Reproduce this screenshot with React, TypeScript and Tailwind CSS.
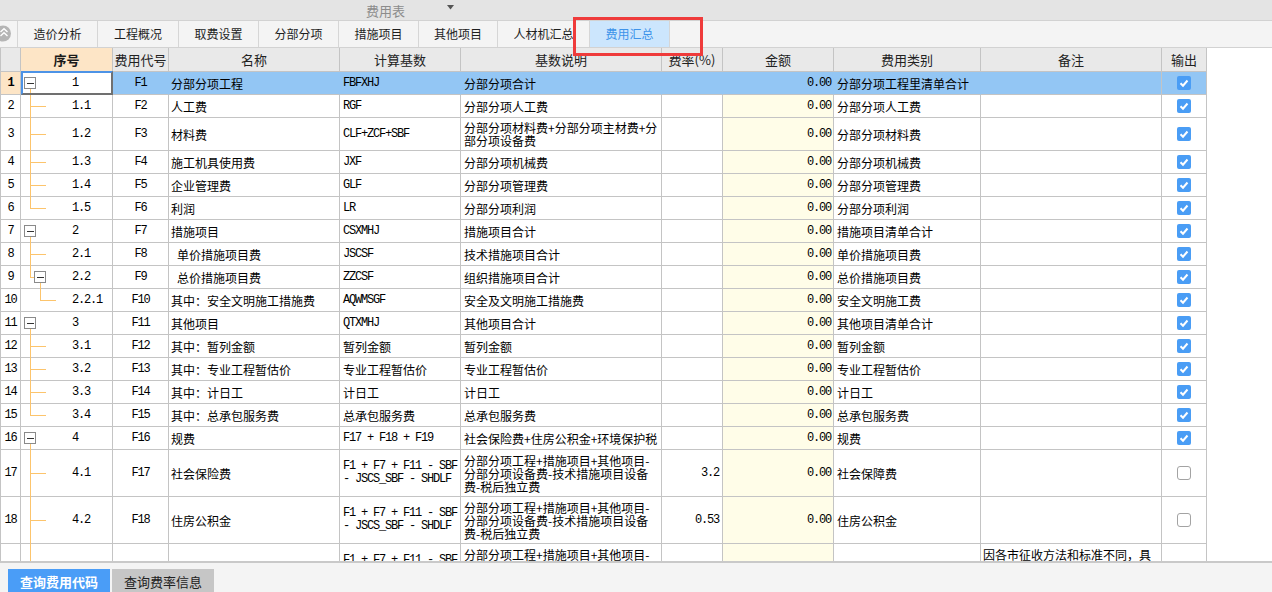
import React from 'react';

const CJK = "font-['Noto_Sans_CJK_SC',sans-serif] text-[12px]";
const MONO = "font-['Liberation_Mono','Noto_Sans_CJK_SC',monospace] text-[12px] tracking-[-1.2px]";
const isAscii = (s: string) => /^[\x00-\x7f]*$/.test(s);
const fontFor = (s: string) => (isAscii(s) ? MONO : CJK);

type VLine = { x: number; from: 'top' | 'box'; to: 'bottom' | 'center' };
type Tree = { box?: number; v: VLine[]; h?: [number, number] };

type RowData = {
  n: string;
  seq: string;
  code: string;
  name: string;
  indent?: boolean;
  base: string[];
  desc: string[];
  rate: string;
  amt: string;
  cat: string;
  note: string[];
  out: boolean | null;
  h: 23 | 33 | 47;
  tree: Tree;
  sel?: boolean;
};

const mid: Tree = { v: [{ x: 9, from: 'top', to: 'bottom' }], h: [9, 25] };
const last: Tree = { v: [{ x: 9, from: 'top', to: 'center' }], h: [9, 25] };
const root: Tree = { box: 3, v: [{ x: 9, from: 'box', to: 'bottom' }] };
const row9: Tree = {
  box: 13,
  v: [
    { x: 9, from: 'top', to: 'center' },
    { x: 19, from: 'box', to: 'bottom' },
  ],
  h: [9, 13],
};
const row10: Tree = { v: [{ x: 19, from: 'top', to: 'center' }], h: [19, 35] };
const trunk: Tree = { v: [{ x: 9, from: 'top', to: 'bottom' }] };

const longBase = ['F1 + F7 + F11 - SBF', '- JSCS_SBF - SHDLF'];
const longDesc = ['分部分项工程+措施项目+其他项目-', '分部分项设备费-技术措施项目设备', '费-税后独立费'];

const rows: RowData[] = [
  { n: '1', seq: '1', code: 'F1', name: '分部分项工程', base: ['FBFXHJ'], desc: ['分部分项合计'], rate: '', amt: '0.00', cat: '分部分项工程里清单合计', note: [], out: true, h: 23, tree: root, sel: true },
  { n: '2', seq: '1.1', code: 'F2', name: '人工费', base: ['RGF'], desc: ['分部分项人工费'], rate: '', amt: '0.00', cat: '分部分项人工费', note: [], out: true, h: 23, tree: mid },
  { n: '3', seq: '1.2', code: 'F3', name: '材料费', base: ['CLF+ZCF+SBF'], desc: ['分部分项材料费+分部分项主材费+分', '部分项设备费'], rate: '', amt: '0.00', cat: '分部分项材料费', note: [], out: true, h: 33, tree: mid },
  { n: '4', seq: '1.3', code: 'F4', name: '施工机具使用费', base: ['JXF'], desc: ['分部分项机械费'], rate: '', amt: '0.00', cat: '分部分项机械费', note: [], out: true, h: 23, tree: mid },
  { n: '5', seq: '1.4', code: 'F5', name: '企业管理费', base: ['GLF'], desc: ['分部分项管理费'], rate: '', amt: '0.00', cat: '分部分项管理费', note: [], out: true, h: 23, tree: mid },
  { n: '6', seq: '1.5', code: 'F6', name: '利润', base: ['LR'], desc: ['分部分项利润'], rate: '', amt: '0.00', cat: '分部分项利润', note: [], out: true, h: 23, tree: last },
  { n: '7', seq: '2', code: 'F7', name: '措施项目', base: ['CSXMHJ'], desc: ['措施项目合计'], rate: '', amt: '0.00', cat: '措施项目清单合计', note: [], out: true, h: 23, tree: root },
  { n: '8', seq: '2.1', code: 'F8', name: '单价措施项目费', indent: true, base: ['JSCSF'], desc: ['技术措施项目合计'], rate: '', amt: '0.00', cat: '单价措施项目费', note: [], out: true, h: 23, tree: mid },
  { n: '9', seq: '2.2', code: 'F9', name: '总价措施项目费', indent: true, base: ['ZZCSF'], desc: ['组织措施项目合计'], rate: '', amt: '0.00', cat: '总价措施项目费', note: [], out: true, h: 23, tree: row9 },
  { n: '10', seq: '2.2.1', code: 'F10', name: '其中：安全文明施工措施费', base: ['AQWMSGF'], desc: ['安全及文明施工措施费'], rate: '', amt: '0.00', cat: '安全文明施工费', note: [], out: true, h: 23, tree: row10 },
  { n: '11', seq: '3', code: 'F11', name: '其他项目', base: ['QTXMHJ'], desc: ['其他项目合计'], rate: '', amt: '0.00', cat: '其他项目清单合计', note: [], out: true, h: 23, tree: root },
  { n: '12', seq: '3.1', code: 'F12', name: '其中：暂列金额', base: ['暂列金额'], desc: ['暂列金额'], rate: '', amt: '0.00', cat: '暂列金额', note: [], out: true, h: 23, tree: mid },
  { n: '13', seq: '3.2', code: 'F13', name: '其中：专业工程暂估价', base: ['专业工程暂估价'], desc: ['专业工程暂估价'], rate: '', amt: '0.00', cat: '专业工程暂估价', note: [], out: true, h: 23, tree: mid },
  { n: '14', seq: '3.3', code: 'F14', name: '其中：计日工', base: ['计日工'], desc: ['计日工'], rate: '', amt: '0.00', cat: '计日工', note: [], out: true, h: 23, tree: mid },
  { n: '15', seq: '3.4', code: 'F15', name: '其中：总承包服务费', base: ['总承包服务费'], desc: ['总承包服务费'], rate: '', amt: '0.00', cat: '总承包服务费', note: [], out: true, h: 23, tree: last },
  { n: '16', seq: '4', code: 'F16', name: '规费', base: ['F17 + F18 + F19'], desc: ['社会保险费+住房公积金+环境保护税'], rate: '', amt: '0.00', cat: '规费', note: [], out: true, h: 23, tree: root },
  { n: '17', seq: '4.1', code: 'F17', name: '社会保险费', base: longBase, desc: longDesc, rate: '3.2', amt: '0.00', cat: '社会保障费', note: [], out: false, h: 47, tree: mid },
  { n: '18', seq: '4.2', code: 'F18', name: '住房公积金', base: longBase, desc: longDesc, rate: '0.53', amt: '0.00', cat: '住房公积金', note: [], out: false, h: 47, tree: mid },
  { n: '', seq: '', code: '', name: '', base: longBase, desc: longDesc, rate: '', amt: '', cat: '', note: ['因各市征收方法和标准不同，具', '体费率请参照当地相关文件规定', '执行'], out: null, h: 47, tree: trunk },
];

const HEIGHT: Record<number, string> = { 23: 'h-[23px]', 33: 'h-[33px]', 47: 'h-[47px]' };

const W = [
  'w-[20px]',
  'w-[92px]',
  'w-[56px]',
  'w-[171px]',
  'w-[121px]',
  'w-[201px]',
  'w-[61px]',
  'w-[111px]',
  'w-[147px]',
  'w-[181px]',
  'w-[45px]',
];

const LINE = 'bg-[#fcc46c]';

function TreeLines({ t }: { t: Tree }) {
  return (
    <>
      {t.v.map((l, i) => {
        const style: React.CSSProperties = { left: l.x };
        if (l.from === 'top') style.top = 0;
        else style.top = 'calc(50% + 6px)';
        if (l.to === 'bottom') style.bottom = -1;
        else style.height = '50%';
        return <span key={i} className={`absolute w-px ${LINE}`} style={style} />;
      })}
      {t.h && (
        <span
          className={`absolute h-px top-1/2 ${LINE}`}
          style={{ left: t.h[0], width: t.h[1] - t.h[0] }}
        />
      )}
      {t.box !== undefined && (
        <span
          className="absolute top-[calc(50%-6px)] w-[12px] h-[12px] border border-[#8a8a8a] bg-white flex items-center justify-center z-10"
          style={{ left: t.box }}
        >
          <span className="w-[7px] h-px bg-[#333]" />
        </span>
      )}
    </>
  );
}

function Check({ on }: { on: boolean | null }) {
  if (on === null) return null;
  if (on)
    return (
      <span className="w-[14px] h-[14px] rounded-[2px] bg-[#4a9df5] flex items-center justify-center">
        <svg width="14" height="14" viewBox="0 0 14 14">
          <polyline points="3.5,7.2 6,9.7 10.5,4.5" fill="none" stroke="#fff" strokeWidth="2" />
        </svg>
      </span>
    );
  return <span className="w-[14px] h-[14px] rounded-[3px] border border-[#a3a3a3] bg-white" />;
}

function Lines({ lines }: { lines: string[] }) {
  return (
    <div className="flex flex-col justify-center">
      {lines.map((l, i) => (
        <div key={i} className={`leading-[13px] whitespace-nowrap ${fontFor(l)}`}>
          {l}
        </div>
      ))}
    </div>
  );
}

function Row({ r }: { r: RowData }) {
  const sel = !!r.sel;
  const bR = sel ? 'border-r-[#93c6f4]' : 'border-r-[#c4c4c4]';
  const base = `shrink-0 border-r border-b border-b-[#c4c4c4] flex items-center overflow-hidden`;
  const bg = sel ? 'bg-[#93c6f4]' : 'bg-white';
  return (
    <div className={`flex shrink-0 ${HEIGHT[r.h]}`}>
      <div
        className={`${base} ${W[0]} border-r-[#c4c4c4] justify-center ${sel ? 'bg-[#fde5c6]' : 'bg-white'}`}
      >
        <span className={`${MONO} leading-[13px] ${sel ? 'font-bold' : ''}`}>{r.n}</span>
      </div>
      <div className={`${base} ${W[1]} ${bR} relative bg-white pl-[51px] overflow-visible`}>
        <TreeLines t={r.tree} />
        <span className={`${MONO} leading-[13px]`}>{r.seq}</span>
        {sel && (
          <span className="absolute left-0 -top-px -right-px -bottom-px border-2 border-t-[#4d93e6] border-l-[#4d93e6] border-r-[#707070] border-b-[#707070] z-20 pointer-events-none" />
        )}
      </div>
      <div className={`${base} ${W[2]} ${bR} ${bg} justify-center`}>
        <span className={`${MONO} leading-[13px]`}>{r.code}</span>
      </div>
      <div className={`${base} ${W[3]} ${bR} ${bg} ${r.indent ? 'pl-[8px]' : 'pl-[2px]'}`}>
        <span className={`${CJK} leading-[13px] whitespace-nowrap`}>{r.name}</span>
      </div>
      <div className={`${base} ${W[4]} ${bR} ${bg} pl-[3px]`}>
        <Lines lines={r.base} />
      </div>
      <div className={`${base} ${W[5]} ${bR} ${bg} pl-[3px]`}>
        <Lines lines={r.desc} />
      </div>
      <div className={`${base} ${W[6]} ${bR} ${bg} justify-end pr-[3px]`}>
        <span className={`${MONO} leading-[13px]`}>{r.rate}</span>
      </div>
      <div className={`${base} ${W[7]} ${bR} ${sel ? 'bg-[#93c6f4]' : 'bg-[#fffde8]'} justify-end pr-[2px]`}>
        <span className={`${MONO} leading-[13px]`}>{r.amt}</span>
      </div>
      <div className={`${base} ${W[8]} ${bR} ${bg} pl-[3px]`}>
        <span className={`${CJK} leading-[13px] whitespace-nowrap`}>{r.cat}</span>
      </div>
      <div className={`${base} ${W[9]} border-r-[#c4c4c4] ${bg} pl-[2px]`}>
        <Lines lines={r.note} />
      </div>
      <div className={`${base} ${W[10]} border-r-[#c4c4c4] ${bg} justify-center`}>
        <Check on={r.out} />
      </div>
    </div>
  );
}

const headers = ['', '序号', '费用代号', '名称', '计算基数', '基数说明', '费率(%)', '金额', '费用类别', '备注', '输出'];

function Header() {
  return (
    <div className="flex shrink-0 h-[24px]">
      {headers.map((h, i) => (
        <div
          key={i}
          className={`shrink-0 ${W[i]} border-r border-b border-[#c4c4c4] flex items-center justify-center text-[13px] leading-none whitespace-nowrap ${
            i === 1 ? 'bg-[#fde5c6] font-bold text-[#1a1a1a]' : 'bg-[#e9e9e9] text-[#222]'
          }`}
        >
          {h}
        </div>
      ))}
    </div>
  );
}

const tabs: [string, string][] = [
  ['造价分析', 'w-[80px]'],
  ['工程概况', 'w-[81px]'],
  ['取费设置', 'w-[80px]'],
  ['分部分项', 'w-[80px]'],
  ['措施项目', 'w-[80px]'],
  ['其他项目', 'w-[79px]'],
  ['人材机汇总', 'w-[92px]'],
  ['费用汇总', 'w-[80px]'],
];

function TabBar() {
  return (
    <div className="h-[28px] shrink-0 bg-[#f4f4f4] border-t border-b border-[#d2d2d2] flex">
      <div className="w-[18px] shrink-0 border-r border-[#d6d6d6] flex items-center overflow-hidden">
        <svg width="17" height="26" viewBox="0 0 17 26">
          <circle cx="3" cy="12.5" r="8" fill="#b5b5b5" />
          <polyline points="0.5,11 4,7.8 7.5,11" fill="none" stroke="#fff" strokeWidth="1.4" />
          <polyline points="0.5,15 4,11.8 7.5,15" fill="none" stroke="#fff" strokeWidth="1.4" />
        </svg>
      </div>
      {tabs.map(([t, w], i) => {
        const active = i === tabs.length - 1;
        return (
          <div
            key={t}
            className={`${w} shrink-0 border-r border-[#d6d6d6] flex items-center justify-center text-[12px] ${
              active ? 'bg-[#cce6fd] text-[#3d93ea]' : 'text-[#1e1e1e]'
            }`}
          >
            {t}
          </div>
        );
      })}
    </div>
  );
}

export default function App() {
  return (
    <div className="relative w-full h-[592px] overflow-hidden flex flex-col bg-white font-['Noto_Sans_CJK_SC',sans-serif] text-[12px] text-black">
      <div className="h-[20px] shrink-0 bg-[#e4e4e4] flex items-center pl-[366px]">
        <span className="text-[13px] text-[#8c8c8c] leading-none">费用表</span>
        <svg className="ml-[42px] mb-[5px]" width="7" height="5" viewBox="0 0 7 5">
          <path d="M0 0H7L3.5 4.5Z" fill="#555" />
        </svg>
      </div>
      <TabBar />
      <div className="h-[513px] shrink-0 overflow-hidden bg-white">
        <div className="w-[1207px] border-l border-[#c4c4c4] flex flex-col">
          <Header />
          {rows.map((r, i) => (
            <Row key={i} r={r} />
          ))}
        </div>
      </div>
      <div className="h-[31px] shrink-0 border-t-2 border-[#c9c9c9] bg-[#f4f4f4] flex items-start pl-[8px] pt-[6px] gap-[2px] overflow-hidden">
        <div className="w-[102px] h-[26px] shrink-0 bg-[#4a9df7] text-white font-bold text-[13px] flex items-center justify-center">
          查询费用代码
        </div>
        <div className="w-[102px] h-[26px] shrink-0 bg-[#c6c6c6] text-[#222] text-[13px] flex items-center justify-center">
          查询费率信息
        </div>
      </div>
      <div className="absolute left-[573px] top-[17px] w-[130px] h-[39px] border-[3px] border-[#ef3b3b] pointer-events-none" />
    </div>
  );
}
